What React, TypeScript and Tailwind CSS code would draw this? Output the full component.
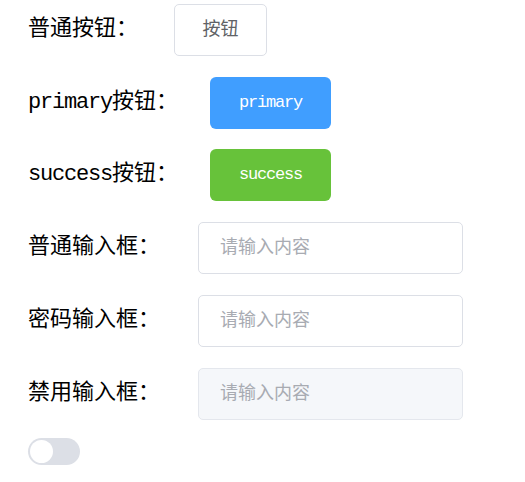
import React from "react";

const labelFont = { fontFamily: '"Liberation Mono", "Noto Sans CJK SC", monospace' };

export default function App() {
  return (
    <div className="bg-white w-[525px] h-[482px] pt-[4px] pl-[28px] text-black" style={labelFont}>
      <div className="flex items-center h-[52px]">
        <span className="w-[146px] text-[22px] leading-none">普通按钮：</span>
        <button className="w-[93px] h-[52px] border border-[#dcdfe6] rounded-[5px] bg-white text-[#606266] text-[18px]">按钮</button>
      </div>
      <div className="flex items-center h-[52px] mt-[21px]">
        <span className="w-[182px] text-[22px] leading-none">
          <span className="tracking-[-1.2px]">primary</span>按钮：
        </span>
        <button className="w-[121px] h-[52px] rounded-[6px] bg-[#409eff] text-white text-[17px] tracking-[-1.2px]">primary</button>
      </div>
      <div className="flex items-center h-[52px] mt-[20px]">
        <span className="w-[182px] text-[22px] leading-none">
          <span className="tracking-[-1.2px]">success</span>按钮：
        </span>
        <button className="w-[121px] h-[52px] rounded-[6px] bg-[#67c23a] text-white text-[17px] tracking-[-1.2px]">success</button>
      </div>
      <div className="flex items-center h-[52px] mt-[21px]">
        <span className="w-[170px] text-[22px] leading-none">普通输入框：</span>
        <input
          className="w-[265px] h-[52px] border border-[#dcdfe6] rounded-[5px] bg-white pl-[21px] text-[18px] text-[#606266] placeholder:text-[#a8abb2] outline-none"
          placeholder="请输入内容"
        />
      </div>
      <div className="flex items-center h-[52px] mt-[21px]">
        <span className="w-[170px] text-[22px] leading-none">密码输入框：</span>
        <input
          type="password"
          className="w-[265px] h-[52px] border border-[#dcdfe6] rounded-[5px] bg-white pl-[21px] text-[18px] text-[#606266] placeholder:text-[#a8abb2] outline-none"
          placeholder="请输入内容"
        />
      </div>
      <div className="flex items-center h-[52px] mt-[21px]">
        <span className="w-[170px] text-[22px] leading-none">禁用输入框：</span>
        <input
          disabled
          className="w-[265px] h-[52px] border border-[#e4e7ed] rounded-[5px] bg-[#f5f7fa] pl-[21px] text-[18px] placeholder:text-[#a8abb2] outline-none"
          placeholder="请输入内容"
        />
      </div>
      <div className="mt-[18px] w-[52px] h-[27px] rounded-full bg-[#dcdfe6] flex items-center pl-[2px]">
        <div className="w-[23px] h-[23px] rounded-full bg-white" />
      </div>
    </div>
  );
}
